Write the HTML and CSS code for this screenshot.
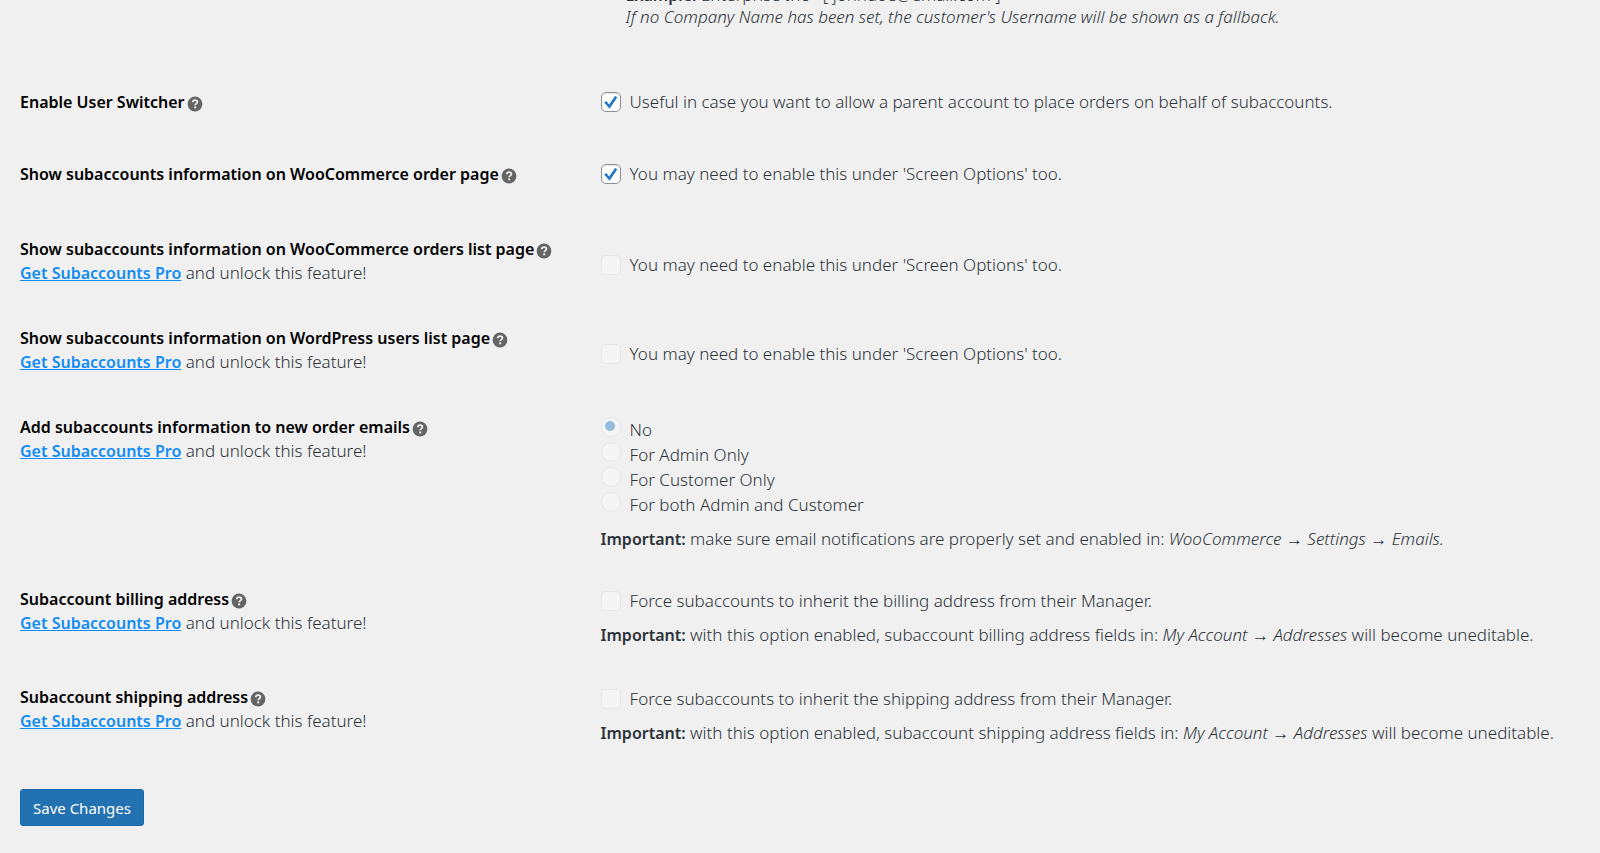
FILE: index.html
```html
<!DOCTYPE html>
<html lang="en">
<head>
    <meta charset="UTF-8">
    <meta name="viewport" content="width=device-width, initial-scale=1.0">
    <title>Subaccounts Settings</title>
    <link rel="stylesheet" href="styles.css">
</head>
<body>
    <!-- Help icon shared by all the option titles -->
    <svg class="sprite" aria-hidden="true">
        <symbol id="help" viewBox="0 0 16 16">
            <circle cx="8" cy="8" r="7.4" fill="#646464"/>
            <path d="M5.7 6.2C5.8 4.8 6.8 4.1 8.1 4.1c1.4 0 2.3.8 2.3 1.9 0 1.6-2.2 1.7-2.2 3.3" fill="none" stroke="#f0f0f1" stroke-width="1.8"/>
            <rect x="7.2" y="10.4" width="2" height="1.9" fill="#f0f0f1"/>
        </symbol>
    </svg>

    <form class="wrap">
        <table class="form-table">
            <tr class="display-name">
                <th></th>
                <td>
                    <p><strong>Example:</strong> Enterprise Inc - [ johndoe@email.com ]</p>
                    <p><em>If no Company Name has been set, the customer's Username will be shown as a fallback.</em></p>
                </td>
            </tr>
            <tr>
                <th scope="row"><span class="title">Enable User Switcher<svg class="tip"><use href="#help"/></svg></span></th>
                <td>
                    <label class="option"><input type="checkbox" checked>Useful in case you want to allow a parent account to place orders on behalf of subaccounts.</label>
                </td>
            </tr>
            <tr>
                <th scope="row"><span class="title">Show subaccounts information on WooCommerce order page<svg class="tip"><use href="#help"/></svg></span></th>
                <td>
                    <label class="option"><input type="checkbox" checked>You may need to enable this under 'Screen Options' too.</label>
                </td>
            </tr>
            <tr class="locked single">
                <th scope="row">
                    <span class="title">Show subaccounts information on WooCommerce orders list page<svg class="tip"><use href="#help"/></svg></span>
                    <p><a href="#">Get Subaccounts Pro</a> and unlock this feature!</p>
                </th>
                <td>
                    <label class="option"><input type="checkbox" disabled>You may need to enable this under 'Screen Options' too.</label>
                </td>
            </tr>
            <tr class="locked single">
                <th scope="row">
                    <span class="title">Show subaccounts information on WordPress users list page<svg class="tip"><use href="#help"/></svg></span>
                    <p><a href="#">Get Subaccounts Pro</a> and unlock this feature!</p>
                </th>
                <td>
                    <label class="option"><input type="checkbox" disabled>You may need to enable this under 'Screen Options' too.</label>
                </td>
            </tr>
            <tr class="locked emails">
                <th scope="row">
                    <span class="title">Add subaccounts information to new order emails<svg class="tip"><use href="#help"/></svg></span>
                    <p><a href="#">Get Subaccounts Pro</a> and unlock this feature!</p>
                </th>
                <td>
                    <label class="option radio"><input type="radio" name="order_emails" checked disabled>No</label>
                    <label class="option radio"><input type="radio" name="order_emails" disabled>For Admin Only</label>
                    <label class="option radio"><input type="radio" name="order_emails" disabled>For Customer Only</label>
                    <label class="option radio"><input type="radio" name="order_emails" disabled>For both Admin and Customer</label>
                    <p class="description"><strong>Important:</strong> make sure email notifications are properly set and enabled in: <em>WooCommerce → Settings → Emails.</em></p>
                </td>
            </tr>
            <tr class="locked">
                <th scope="row">
                    <span class="title">Subaccount billing address<svg class="tip"><use href="#help"/></svg></span>
                    <p><a href="#">Get Subaccounts Pro</a> and unlock this feature!</p>
                </th>
                <td>
                    <label class="option"><input type="checkbox" disabled>Force subaccounts to inherit the billing address from their Manager.</label>
                    <p class="description"><strong>Important:</strong> with this option enabled, subaccount billing address fields in: <em>My Account → Addresses</em> will become uneditable.</p>
                </td>
            </tr>
            <tr class="locked">
                <th scope="row">
                    <span class="title">Subaccount shipping address<svg class="tip"><use href="#help"/></svg></span>
                    <p><a href="#">Get Subaccounts Pro</a> and unlock this feature!</p>
                </th>
                <td>
                    <label class="option"><input type="checkbox" disabled>Force subaccounts to inherit the shipping address from their Manager.</label>
                    <p class="description"><strong>Important:</strong> with this option enabled, subaccount shipping address fields in: <em>My Account → Addresses</em> will become uneditable.</p>
                </td>
            </tr>
        </table>
        <button type="submit" class="button-primary">Save Changes</button>
    </form>
</body>
</html>
```
FILE: styles.css
```css
body {
    background-color: #f0f0f1;
    color: #2c3338;
    font-family: "Noto Sans", sans-serif;
    font-size: 17px;
    font-weight: 300;
    line-height: 24px;
    margin: 0;
}
p {
    margin: 0;
}
strong {
    font-size: 16px;
    font-weight: 600;
}
.sprite {
    display: none;
}
.wrap {
    padding: 0 20px 24px;
    /* the page is scrolled part way down the settings */
    margin-top: -16px;
}
.form-table {
    width: 100%;
    border-collapse: collapse;
}
.form-table th {
    width: 36%;
    padding: 20px 0 28px;
    text-align: left;
    vertical-align: top;
    font-weight: 300;
    box-sizing: border-box;
}
.form-table td {
    padding: 20px 0 28px 19px;
    vertical-align: top;
}
.form-table .display-name td {
    padding: 0 0 42px 44px;
    line-height: 22px;
}
.form-table .locked th {
    padding: 23px 0 18px;
}
.form-table .locked td {
    padding-top: 25px;
    padding-bottom: 15px;
}
.form-table .single td {
    padding-top: 39px;
}
.form-table .emails td {
    padding-bottom: 13px;
}
.title {
    display: flex;
    align-items: center;
    color: #000000;
    font-size: 16px;
    font-weight: 600;
}
.tip {
    width: 16px;
    height: 16px;
    margin: 3px 0 0 2px;
    flex-shrink: 0;
}
a {
    color: #108cf5;
    font-size: 16px;
    font-weight: 600;
    text-decoration: underline;
}
.option {
    display: flex;
    align-items: center;
    gap: 9px;
}
.option input {
    appearance: none;
    display: flex;
    align-items: center;
    justify-content: center;
    width: 20px;
    height: 20px;
    margin: 0;
    flex-shrink: 0;
    box-sizing: border-box;
    background-color: #ffffff;
    border: 1px solid #8c8f94;
    border-radius: 5px;
    box-shadow: inset 0 1px 2px rgba(0, 0, 0, 0.1);
}
.option input[type="checkbox"]:checked::before {
    content: "";
    width: 14px;
    height: 14px;
    background-color: #2478c4;
    clip-path: polygon(4% 54%, 19% 43%, 40% 67%, 81% 7%, 98% 16%, 43% 98%);
}
.option input:disabled {
    background-color: #f5f5f5;
    border-color: #e6e6e7;
    box-shadow: none;
}
.radio {
    align-items: flex-start;
    line-height: 25px;
}
.option input[type="radio"] {
    border-radius: 50%;
}
.option input[type="radio"]:checked::before {
    content: "";
    width: 10px;
    height: 10px;
    margin: 0 2px 2px 0;
    border-radius: 50%;
    background-color: #95bbde;
}
.description {
    margin-top: 10px;
}
.button-primary {
    display: block;
    margin-top: 29px;
    padding: 0 12px;
    height: 37px;
    background-color: #2271b1;
    color: #ffffff;
    border: 1px solid #1b68a8;
    border-radius: 3px;
    font-family: inherit;
    font-size: 15px;
    cursor: pointer;
}
```
